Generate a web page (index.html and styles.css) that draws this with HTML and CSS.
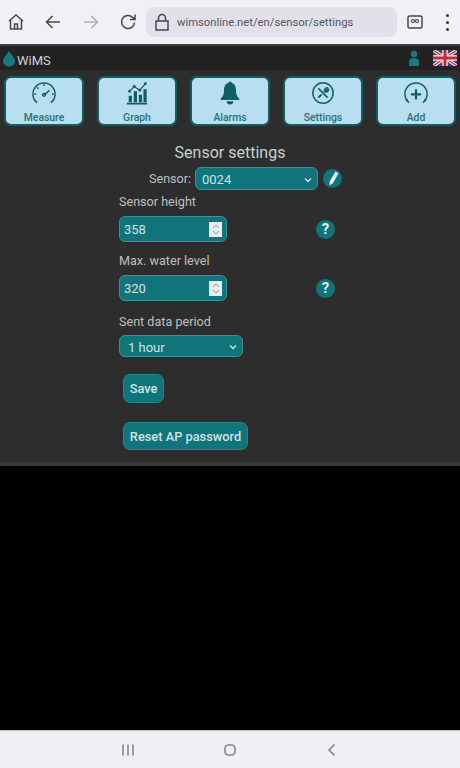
FILE: index.html
```html
<!DOCTYPE html>
<html lang="en">
  <head>
    <meta charset="UTF-8" />
    <meta name="viewport" content="width=device-width, initial-scale=1.0" />
    <title>Sensor settings</title>
    <link rel="stylesheet" href="styles.css">
  </head>
  <body>
    <div class="browser-bar">
      <svg class="bar-icon" width="20" height="20" viewBox="0 0 20 20"><path d="M3 9 10 3l7 6M4.500 8v9h11V8M8.500 17v-5h3v5" /></svg>
      <svg class="bar-icon back" width="20" height="20" viewBox="0 0 20 20"><path d="M17 10H3.500M9.500 4 3.500 10l6 6" /></svg>
      <svg class="bar-icon forward" width="20" height="20" viewBox="0 0 20 20"><path d="M3 10h13.500M10.500 4l6 6-6 6" /></svg>
      <svg class="bar-icon reload" width="20" height="20" viewBox="0 0 20 20"><path d="M16.500 10.500a6.500 6.500 0 1 1-2-5.200L17 7.500M17 2.500v5h-5" /></svg>
      <div class="url-box">
        <svg class="bar-icon" width="16" height="18" viewBox="0 0 16 18"><path d="M2 8h12v9H2zM4.500 8V5a3.500 3.500 0 0 1 7 0v3" /></svg>
        <span class="url">wimsonline.net/en/sensor/settings</span>
      </div>
      <svg class="bar-icon tab" width="16" height="14" viewBox="0 0 16 14"><rect x="1" y="1" width="14" height="12" rx="1.500" /><circle cx="6" cy="6" r="1.500" stroke-width="1.200" /><circle cx="10" cy="6" r="1.500" stroke-width="1.200" /></svg>
      <div class="dots"><i></i><i></i><i></i></div>
    </div>

    <div class="app">
      <header class="top">
        <div class="brand">
          <svg width="14" height="17" viewBox="0 0 14 17"><path d="M7 1C5 4.500 1 7.500 1 11a6 5.500 0 0 0 12 0C13 7.500 9 4.500 7 1z" fill="#147a80" /></svg>
          <span>WiMS</span>
        </div>
        <div class="top-right">
          <svg width="12" height="16" viewBox="0 0 12 16"><circle cx="6" cy="4" r="3.200" fill="#147a80" /><path d="M1 16v-4C1 9.500 3 8 6 8s5 1.500 5 4v4z" fill="#147a80" /></svg>
          <svg class="flag" width="24" height="16" viewBox="0 0 24 16">
            <rect width="24" height="16" fill="#39457f" />
            <path d="M0 0l24 16M24 0 0 16" stroke="#eee" stroke-width="3.500" />
            <path d="M0 0l24 16M24 0 0 16" stroke="#c8283c" stroke-width="1.200" />
            <path d="M12 0v16M0 8h24" stroke="#eee" stroke-width="5.500" />
            <path d="M12 0v16M0 8h24" stroke="#c8283c" stroke-width="3" />
          </svg>
        </div>
      </header>

      <nav class="menu">
        <a class="menu-item">
          <svg width="28" height="26" viewBox="0 0 28 26"><path d="M6.500 23.500a12 12 0 1 1 15 0M14.500 15l5.500-5" /><path d="M5.500 14H3.500M24.500 14h-2M14 5.500V3.500M8 8.500 6.500 7" /><circle cx="14" cy="15" r="1.500" /></svg>
          <span>Measure</span>
        </a>
        <a class="menu-item">
          <svg class="filled" width="26" height="26" viewBox="0 0 26 26"><path d="M2 23.500h22v2H2zM4 16h3.500v7H4zM9.500 11h3.500v12H9.500zM15 15h3.500v8H15zM20 9h3.500v14H20z" /><path class="line" d="M5 11l5-5 6 4 6-7" /><circle cx="5" cy="11" r="1.600" /><circle cx="10" cy="6" r="1.600" /><circle cx="16" cy="10" r="1.600" /><circle cx="22" cy="3" r="1.600" /></svg>
          <span>Graph</span>
        </a>
        <a class="menu-item">
          <svg class="filled" width="24" height="26" viewBox="0 0 24 26"><circle cx="12" cy="2.500" r="2" /><path d="M12 2c-5 0-6.500 4-6.500 8 0 5-1.500 7-3.500 9v1.500h20V19c-2-2-3.500-4-3.500-9 0-4-1.500-8-6.500-8z" /><path d="M8.500 22h7a3.500 3.500 0 0 1-7 0z" /></svg>
          <span>Alarms</span>
        </a>
        <a class="menu-item">
          <svg width="26" height="26" viewBox="0 0 26 26"><circle cx="13" cy="13" r="11" /><path d="M8 8l10 10" stroke-width="1.800" /><path d="M8 18l3.500-3.500" stroke-width="2.200" /><path d="M18.500 7.500a2.800 2.800 0 0 0-4 3.500l-.500.500 1 1 .500-.500a2.800 2.800 0 0 0 3.500-4l-2 1.500-1-1z" fill="#125f63" stroke-width="1" /></svg>
          <span>Settings</span>
        </a>
        <a class="menu-item">
          <svg width="28" height="26" viewBox="0 0 28 26"><path d="M6.500 23.500a12 12 0 1 1 15 0" /><path d="M3 21l2-1M25 21l-2-1" /><path d="M14 9v11M8.500 14.500h11" stroke-width="2.400" /></svg>
          <span>Add</span>
        </a>
      </nav>

      <main class="settings">
        <h1>Sensor settings</h1>
        <div class="sensor-row">
          <label>Sensor:</label>
          <div class="select sensor-select">
            <span>0024</span>
            <svg width="8" height="6" viewBox="0 0 8 6"><path d="M1 1.500l3 3 3-3" /></svg>
          </div>
          <span class="round-btn">
            <svg width="12" height="15" viewBox="0 0 12 15"><path d="M8.500 .500l3 1.800-5.500 9.700-3.500 2.500.300-4.200z" fill="#eef7f8" /></svg>
          </span>
        </div>

        <div class="field">
          <label>Sensor height</label>
          <div class="field-row">
            <div class="number-input">
              <span>358</span>
              <span class="spinner"><svg width="8" height="13" viewBox="0 0 8 13"><path d="M1 5l3-3 3 3M1 8l3 3 3-3" /></svg></span>
            </div>
            <span class="round-btn help">?</span>
          </div>
        </div>

        <div class="field">
          <label>Max. water level</label>
          <div class="field-row">
            <div class="number-input">
              <span>320</span>
              <span class="spinner"><svg width="8" height="13" viewBox="0 0 8 13"><path d="M1 5l3-3 3 3M1 8l3 3 3-3" /></svg></span>
            </div>
            <span class="round-btn help">?</span>
          </div>
        </div>

        <div class="field period">
          <label>Sent data period</label>
          <div class="select period-select">
            <span>1 hour</span>
            <svg width="8" height="6" viewBox="0 0 8 6"><path d="M1 1.500l3 3 3-3" /></svg>
          </div>
        </div>

        <button class="btn save">Save</button>
        <button class="btn reset">Reset AP password</button>
      </main>
    </div>

    <div class="blank"></div>

    <div class="nav-bar">
      <svg width="14" height="14" viewBox="0 0 14 14"><path d="M2 1.500v11M7 1.500v11M12 1.500v11" /></svg>
      <svg width="14" height="14" viewBox="0 0 14 14"><rect x="2" y="2" width="10" height="10" rx="3.500" /></svg>
      <svg width="14" height="14" viewBox="0 0 14 14"><path d="M9.500 1.500 4 7l5.500 5.500" /></svg>
    </div>
  </body>
</html>
```

FILE: styles.css
```css
body {
  font-family: Roboto, "Liberation Sans", sans-serif;
  background-color: #000;
  margin: 0;
  padding: 0;
  height: 768px;
  display: flex;
  flex-direction: column;
  overflow: hidden;
}
svg {
  display: block;
  flex: none;
}

/* browser chrome */
.browser-bar {
  height: 44px;
  flex: none;
  box-sizing: border-box;
  background: #f1f0f6;
  display: flex;
  align-items: center;
  padding: 0 0 0 6px;
}
.bar-icon {
  fill: none;
  stroke: #45454f;
  stroke-width: 1.500;
}
.back {
  margin-left: 17px;
}
.forward {
  margin-left: 18px;
  stroke: #aeaeb6;
}
.reload {
  margin-left: 17px;
}
.url-box {
  margin-left: 8px;
  width: 251px;
  height: 30px;
  box-sizing: border-box;
  background: #e2e1ea;
  border-radius: 8px;
  display: flex;
  align-items: center;
  padding-left: 8px;
  gap: 7px;
}
.url {
  font-size: 11.250px;
  color: #55555f;
}
.tab {
  margin-left: 10px;
}
.dots {
  margin-left: 23px;
  display: flex;
  flex-direction: column;
  gap: 4px;
}
.dots i {
  width: 3px;
  height: 3px;
  border-radius: 50%;
  background: #33333b;
}

/* app */
.app {
  height: 422px;
  flex: none;
  box-sizing: border-box;
  background: #2d2d2d;
  border-bottom: 4px solid #3a3a3a;
}
.top {
  height: 26px;
  background: #222;
  border-top: 2px solid #3c3c3c;
  box-sizing: border-box;
  display: flex;
  justify-content: space-between;
  align-items: center;
  padding: 0 3px 0 2px;
}
.brand {
  display: flex;
  align-items: center;
  gap: 1px;
  color: #c9d1d3;
  font-size: 13px;
}
.brand span {
  margin-top: 4px;
}
.top-right {
  display: flex;
  align-items: center;
  gap: 13px;
}
.menu {
  display: flex;
  justify-content: space-between;
  padding: 6px 4px 0 4px;
}
.menu-item {
  width: 80px;
  height: 50px;
  box-sizing: border-box;
  background: #b9deef;
  border: 2px solid #125f63;
  border-radius: 7px;
  display: flex;
  flex-direction: column;
  align-items: center;
  padding-top: 3px;
  color: #2a727b;
  font-size: 10.400px;
  font-weight: 500;
}
.menu-item svg {
  fill: none;
  stroke: #125f63;
  stroke-width: 1.600;
  height: 24px;
}
.menu-item span {
  margin-top: 6px;
}
.menu-item .filled {
  fill: #125f63;
  stroke: none;
}
.menu-item .filled .line {
  fill: none;
  stroke: #125f63;
  stroke-width: 1.300;
}

/* form */
.settings {
  padding: 0 0 0 119px;
  color: #bcc0c1;
  font-size: 12.600px;
}
h1 {
  font-size: 16px;
  font-weight: 400;
  color: #c8d1d3;
  margin: 0;
  padding-top: 17px;
  width: 222px;
  text-align: center;
  line-height: 19px;
}
.sensor-row {
  display: flex;
  align-items: center;
  margin-top: 5px;
  padding-left: 30px;
  height: 23px;
}
.sensor-row label {
  width: 46px;
}
.select {
  box-sizing: border-box;
  background: #0f757b;
  border: 1px solid #3f9096;
  border-radius: 6px;
  color: #cfe2e4;
  display: flex;
  justify-content: space-between;
  align-items: center;
  padding: 2px 5px 0 6px;
  font-size: 13px;
}
.select svg {
  fill: none;
  stroke: #d9e8ea;
  stroke-width: 1.300;
}
.sensor-select {
  width: 123px;
  height: 23px;
}
.period-select {
  width: 124px;
  height: 22px;
  margin-top: 5px;
  padding-left: 8px;
}
.round-btn {
  width: 19px;
  height: 19px;
  border-radius: 50%;
  background: #0f757b;
  display: flex;
  align-items: center;
  justify-content: center;
  margin-left: 5px;
}
.help {
  color: #dcecee;
  font-size: 15px;
  font-weight: 700;
  margin-left: 89px;
}
.field {
  margin-top: 4px;
}
.field label {
  display: block;
  line-height: 16px;
  height: 16px;
}
.field + .field {
  margin-top: 11px;
}
.field + .period {
  margin-top: 13px;
}
.field-row {
  display: flex;
  align-items: center;
  margin-top: 6px;
}
.number-input {
  width: 108px;
  height: 26px;
  box-sizing: border-box;
  background: #0f757b;
  border: 1px solid #3f9096;
  border-radius: 6px;
  color: #cfe2e4;
  font-size: 13px;
  display: flex;
  align-items: center;
  justify-content: space-between;
  padding: 0 4px 0 4px;
}
.spinner {
  width: 13px;
  height: 15px;
  background: #e6eef0;
  display: flex;
  align-items: center;
  justify-content: center;
}
.spinner svg {
  fill: none;
  stroke: #8a9a9c;
  stroke-width: 1;
}
.btn {
  display: block;
  margin: 17px 0 0 4px;
  padding: 0;
  height: 29px;
  font-family: inherit;
  font-size: 12.800px;
  font-weight: 500;
  color: #cfe4e6;
  background: #0f757b;
  border: 1px solid #26858a;
  border-radius: 7px;
}
.save {
  width: 41px;
}
.reset {
  width: 125px;
  height: 28px;
  margin-top: 19px;
}

.blank {
  flex: 1;
  background: #000;
}
.nav-bar {
  height: 38px;
  flex: none;
  box-sizing: border-box;
  background: #f0eff5;
  border-top: 1px solid #bdbdc2;
  display: flex;
  align-items: center;
  padding-left: 121px;
  gap: 88px;
}
.nav-bar svg {
  fill: none;
  stroke: #85858d;
  stroke-width: 1.600;
}
```
